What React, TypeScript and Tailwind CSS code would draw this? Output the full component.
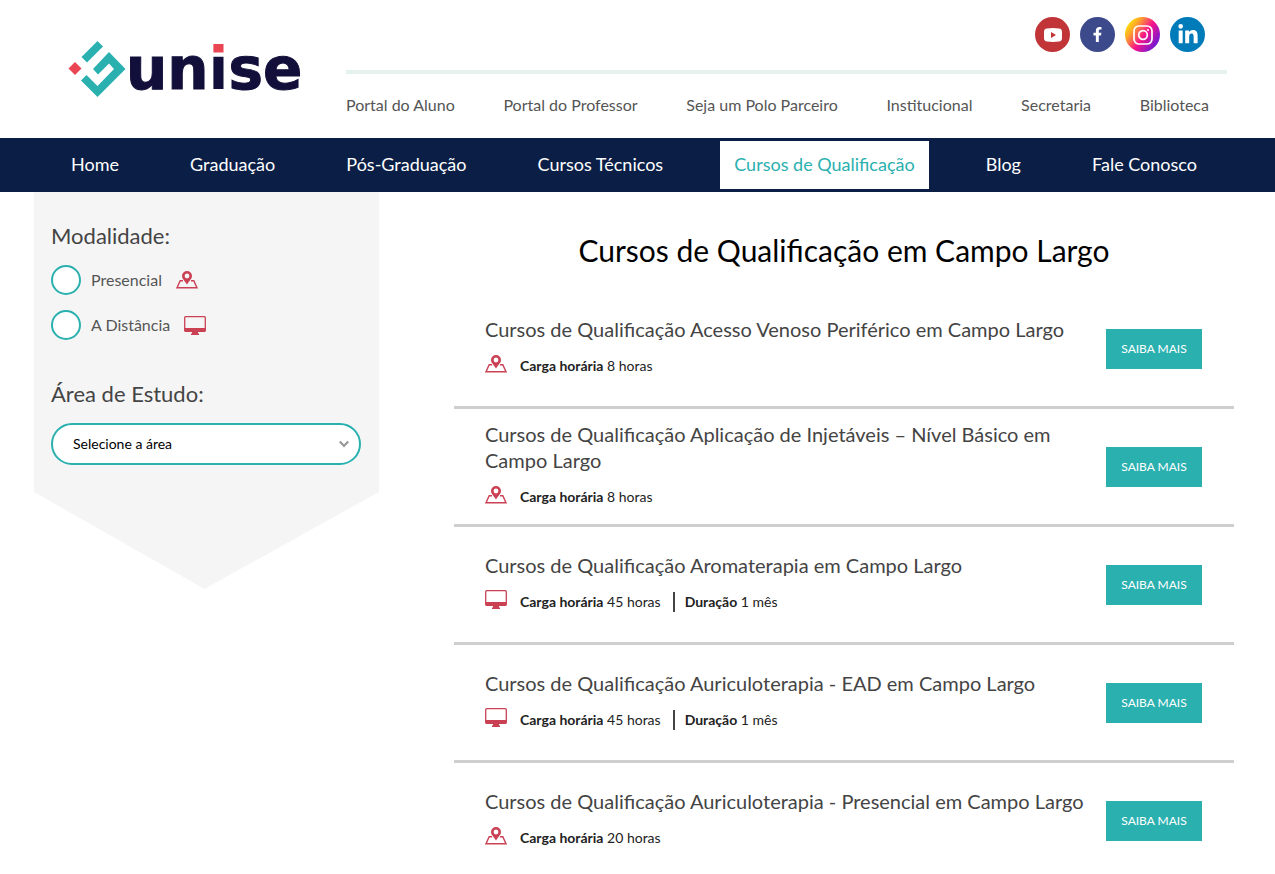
import React from "react";
import { FaFacebookF, FaLinkedinIn } from "react-icons/fa";

type Mode = "presencial" | "distancia";

interface Course {
  title: string;
  mode: Mode;
  hours: string;
  duration?: string;
}

const portalLinks = [
  "Portal do Aluno",
  "Portal do Professor",
  "Seja um Polo Parceiro",
  "Institucional",
  "Secretaria",
  "Biblioteca",
];

const menu = [
  "Home",
  "Graduação",
  "Pós-Graduação",
  "Cursos Técnicos",
  "Cursos de Qualificação",
  "Blog",
  "Fale Conosco",
];

const courses: Course[] = [
  { title: "Cursos de Qualificação Acesso Venoso Periférico em Campo Largo", mode: "presencial", hours: "8 horas" },
  { title: "Cursos de Qualificação Aplicação de Injetáveis – Nível Básico em Campo Largo", mode: "presencial", hours: "8 horas" },
  { title: "Cursos de Qualificação Aromaterapia em Campo Largo", mode: "distancia", hours: "45 horas", duration: "1 mês" },
  { title: "Cursos de Qualificação Auriculoterapia - EAD em Campo Largo", mode: "distancia", hours: "45 horas", duration: "1 mês" },
  { title: "Cursos de Qualificação Auriculoterapia - Presencial em Campo Largo", mode: "presencial", hours: "20 horas" },
];

function MapIcon() {
  return (
    <svg viewBox="0 0 22 18" className="h-[18px] w-[22px] shrink-0" aria-hidden="true">
      <path d="M7 9.8H4.200L1 16.700h20l-3.200-6.900H15" fill="none" stroke="#cb4154" strokeWidth="1.400" />
      <path
        fillRule="evenodd"
        fill="#cb4154"
        d="M11 0a5 5 0 0 0-5 5c0 2.700 2.700 4.800 5 8.500 2.300-3.700 5-5.800 5-8.500a5 5 0 0 0-5-5Zm0 2.600a2.400 2.400 0 1 1 0 4.800 2.400 2.400 0 0 1 0-4.800Z"
      />
    </svg>
  );
}

function ScreenIcon() {
  return (
    <svg viewBox="0 0 22 19" className="h-[19px] w-[22px] shrink-0" aria-hidden="true">
      <rect x="0.700" y="0.700" width="20.600" height="14.600" rx="1" fill="none" stroke="#cb4154" strokeWidth="1.300" />
      <path d="M0.500 12h21v2.500q0 1.500-1.500 1.500H14v1.500h1V19H7v-1.500h1V16H2q-1.500 0-1.500-1.500Z" fill="#cb4154" />
    </svg>
  );
}

function ModeIcon({ mode }: { mode: Mode }) {
  return mode === "presencial" ? <MapIcon /> : <ScreenIcon />;
}

function Logo() {
  return (
    <a href="#" className="flex items-center" aria-label="unise">
      <svg viewBox="0 0 58 56" className="h-[56px] w-[58px]" aria-hidden="true">
        <path d="M7 21 13.500 27.500 7 34 .5 27.500Z" fill="#e94552" />
        <path
          fill="#2bb0b0"
          d="M29.500 0 35 5.500 19 21.500 13.500 16ZM41 11 57.500 28 29.500 56 13 39.500 18.500 34 29.500 45 46 28 41 22.500 30 33.500 25 28Z"
        />
      </svg>
      <span className="font-['DejaVu_Sans',sans-serif] text-[58px] leading-[56px] font-bold text-[#12103a]">
        <span className="[-webkit-text-stroke:1px_#12103a]">un</span>
        <span className="bg-linear-to-b from-[#e94552] from-[28%] to-[#12103a] to-[28%] bg-clip-text text-transparent">i</span>
        <span className="[-webkit-text-stroke:1px_#12103a]">se</span>
      </span>
    </a>
  );
}

function Social() {
  const circle = "flex size-[35px] items-center justify-center rounded-full text-white";
  return (
    <div className="flex justify-end gap-[10px] pr-[22px]">
      <a href="#" aria-label="YouTube" className={`${circle} bg-[#c13538]`}>
        <svg viewBox="0 0 18 14" className="h-[14px] w-[18px]" aria-hidden="true">
          <path fillRule="evenodd" fill="currentColor" d="M3 .4Q9-.4 15 .4 18 .6 18 4v6q0 3.400-3 3.600-6 .8-12 0Q0 13.400 0 10V4Q0 .6 3 .4ZM7 4v6l5-3Z" />
        </svg>
      </a>
      <a href="#" aria-label="Facebook" className={`${circle} bg-[#3c4a8c]`}>
        <FaFacebookF size={15} />
      </a>
      <a
        href="#"
        aria-label="Instagram"
        className={`${circle} bg-[linear-gradient(125deg,#fff200_8%,#ffa32b_28%,#f7138a_54%,#8a18c8_80%,#3c14e0_100%)]`}
      >
        <svg viewBox="0 0 20 20" className="size-5" fill="none" stroke="currentColor" strokeWidth="1.700" aria-hidden="true">
          <rect x="1" y="1" width="18" height="18" rx="5" />
          <circle cx="10" cy="10" r="4.300" />
          <circle cx="15" cy="5" r="1" fill="currentColor" stroke="none" />
        </svg>
      </a>
      <a href="#" aria-label="LinkedIn" className={`${circle} bg-[#007bba]`}>
        <FaLinkedinIn size={22} />
      </a>
    </div>
  );
}

function Header() {
  return (
    <header>
      <div className="flex pr-12 pl-[68px]">
        <div className="w-[278px] shrink-0 pt-[41px]">
          <Logo />
        </div>
        <div className="min-w-0 flex-1 pt-[17px]">
          <Social />
          <div className="mt-[18px] h-1 bg-[#e5f2f0]" />
          <nav aria-label="Portais" className="flex h-16 items-center justify-between pr-[18px] pb-[2px]">
            {portalLinks.map((label) => (
              <a key={label} href="#" className="text-base whitespace-nowrap text-[#555]">
                {label}
              </a>
            ))}
          </nav>
        </div>
      </div>
      <nav aria-label="Principal" className="flex h-[54px] items-center justify-between bg-[#0a1e46] pr-16 pl-[57px]">
        {menu.map((label) => (
          <a
            key={label}
            href="#"
            className={`flex h-12 items-center px-[14px] pb-[2px] text-lg whitespace-nowrap ${
              label === "Cursos de Qualificação" ? "bg-white text-[#2bb0b0]" : "text-white"
            }`}
          >
            {label}
          </a>
        ))}
      </nav>
    </header>
  );
}

function Filters() {
  const radio =
    "size-[30px] appearance-none rounded-full border-2 border-[#2bb0b0] bg-white checked:bg-[#2bb0b0]";
  return (
    <aside className="w-[345px] shrink-0">
      <form className="h-[300px] bg-[#f5f5f5] px-[17px] pt-7">
        <fieldset>
          <legend className="text-[22px] leading-8 text-[#444]">Modalidade:</legend>
          <label className="mt-[13px] flex items-center gap-[10px] text-base text-[#555]">
            <input type="radio" name="modalidade" className={radio} />
            Presencial
            <span className="ml-1"><MapIcon /></span>
          </label>
          <label className="mt-[15px] flex items-center gap-[10px] text-base text-[#555]">
            <input type="radio" name="modalidade" className={radio} />
            A Distância
            <span className="ml-1"><ScreenIcon /></span>
          </label>
        </fieldset>
        <label htmlFor="area" className="mt-[38px] block text-[22px] leading-8 text-[#444]">
          Área de Estudo:
        </label>
        <div className="mt-[13px] grid items-center">
          <select
            id="area"
            className="col-start-1 row-start-1 h-[42px] w-[310px] appearance-none rounded-full border-2 border-[#2bb0b0] bg-white px-5 text-sm text-black"
          >
            <option>Selecione a área</option>
          </select>
          <svg
            viewBox="0 0 10 8"
            className="pointer-events-none col-start-1 row-start-1 ml-[288px] h-2 w-[10px]"
            aria-hidden="true"
          >
            <path d="M0.800 1.500 5 6l4.200-4.500" fill="none" stroke="#999" strokeWidth="2.200" />
          </svg>
        </div>
      </form>
      <svg viewBox="0 0 345 97" preserveAspectRatio="none" className="block h-[97px] w-full" aria-hidden="true">
        <path d="M0 0H345L170.500 97Z" fill="#f5f5f5" />
      </svg>
    </aside>
  );
}

function CourseRow({ course }: { course: Course }) {
  return (
    <li className="flex min-h-[118px] items-center justify-between border-b-3 border-[#cfcfcf] pr-8 pl-[31px]">
      <div className="w-[600px] pb-[3px]">
        <h2 className="text-xl leading-[26px] text-[#444]">{course.title}</h2>
        <div className="mt-[11px] flex h-[26px] items-center text-sm text-[#222]">
          <span className="mr-[13px] pb-1"><ModeIcon mode={course.mode} /></span>
          <span><b>Carga horária</b> {course.hours}</span>
          {course.duration && (
            <span className="ml-3 flex items-center">
              <span className="mr-[10px] h-5 w-[2px] bg-[#444]" />
              <span><b>Duração</b> {course.duration}</span>
            </span>
          )}
        </div>
      </div>
      <a href="#" className="flex h-10 w-24 items-center justify-center bg-[#2bb0b0] text-xs text-white">
        SAIBA MAIS
      </a>
    </li>
  );
}

export default function App() {
  return (
    <div className="bg-white font-[Lato,sans-serif]">
      <Header />
      <div className="flex justify-between pr-[41px] pl-[34px]">
        <Filters />
        <main className="ml-[75px] min-w-0 flex-1">
          <h1 className="pt-[38px] pb-[21px] text-center text-[30px] leading-10 text-black">
            Cursos de Qualificação em Campo Largo
          </h1>
          <ul>
            {courses.map((course) => (
              <CourseRow key={course.title} course={course} />
            ))}
          </ul>
        </main>
      </div>
    </div>
  );
}
